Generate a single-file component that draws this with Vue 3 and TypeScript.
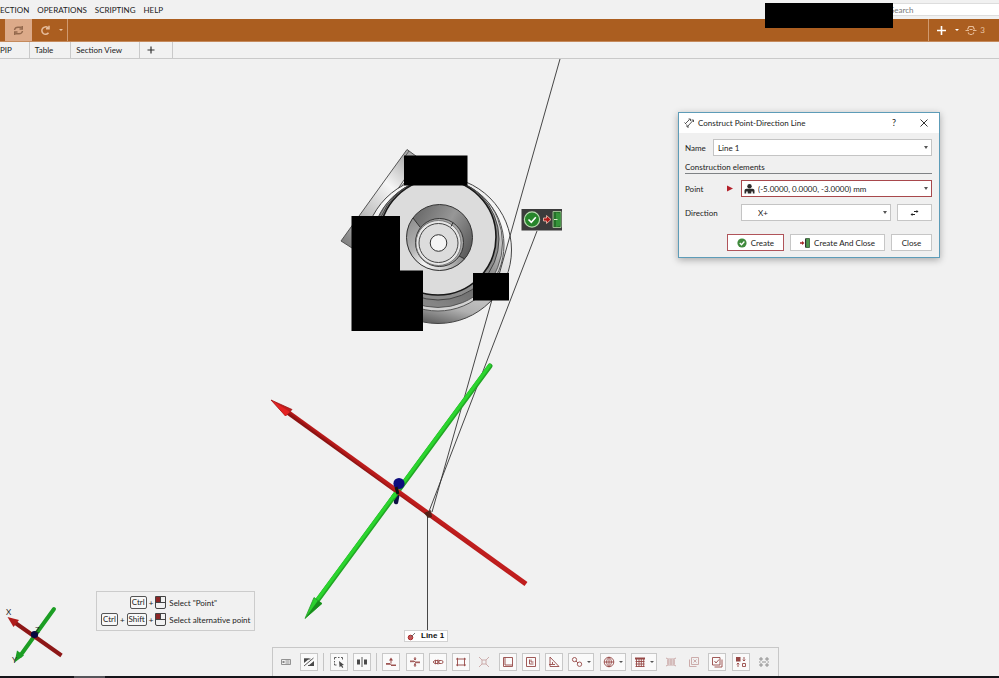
<script setup lang="ts">
import { ref } from 'vue'

interface Tool {
  kind: 'tool' | 'menu' | 'sep'
  label?: string
  tone?: string
  stroke?: string
  fill?: string
  flat?: boolean
  faded?: boolean
}

const name = ref('Line 1')
const point = ref('(-5.0000, 0.0000, -3.0000) mm')
const direction = ref('X+')

const menus = ['ECTION', 'OPERATIONS', 'SCRIPTING', 'HELP']
const tabs = ['PIP', 'Table', 'Section View']

const dark = '#4a4a4a'
const red = '#964846'

const tools: Tool[] = [
  { kind: 'tool', label: 'Name tag', tone: '#888', stroke: 'M1.500 3.500h9v5h-9zM5.500 5h4M5.500 7h4', fill: 'M2.500 5h2v2h-2z', flat: true },
  { kind: 'tool', label: 'Toggle shading', tone: dark, stroke: 'M1 10L10.500 2M1 3h6.500M5 9.500h6', fill: 'M1 2.500h5.500L1 7zM11 5v5H5z' },
  { kind: 'sep' },
  { kind: 'tool', label: 'Select area', tone: dark, stroke: 'M1.500 3.500v-2h2M5 1.500h1.500M8 1.500h1.500v2M1.500 5v1.500M1.500 7.500v1.500h2', fill: 'M6 5l5 4-2 .3 1.300 2-1 .7-1.300-2-1.400 1.300z' },
  { kind: 'tool', label: 'Mirror', tone: dark, stroke: 'M6 1v10', fill: 'M1 3.500h3v5H1zM8 3.500h3v5H8z' },
  { kind: 'sep' },
  { kind: 'tool', label: 'Project point', tone: red, stroke: 'M1 7.500h4l1 1.500h5M6 3v4.500M1 8.300h4M6 9.500h5', fill: 'M4 4.500l2-3 2 3z' },
  { kind: 'tool', label: 'Intersect', tone: red, stroke: 'M1 5h4l1 1h5M1 5.700h4M6 6.700h5M6 1v3M6 7v4', fill: 'M4.500 2.500h3L6 4.500zM4.500 9.500h3L6 7.500z' },
  { kind: 'tool', label: 'Distance', tone: red, stroke: 'M1 6l2.500-2v4zM3.500 4.500H6v3H3.500M6 3.500v5M7 4.500h2.500q1.500 0 1.500 1.500t-1.500 1.500H7z' },
  { kind: 'tool', label: 'Plane', tone: red, stroke: 'M2.500 3h7v6h-7zM1 3h1.500M9.500 3H11M1 9h1.500M9.500 9H11M2.500 1.800V3M9.500 1.800V3M2.500 9v1.200M9.500 9v1.200' },
  { kind: 'tool', label: 'Explode', tone: red, stroke: 'M4 4h4v4H4zM1 1l3 3M11 1L8 4M1 11l3-3M11 11L8 8', flat: true, faded: true },
  { kind: 'tool', label: 'Rectangle', tone: red, stroke: 'M1.500 1.500h9v9h-9zM3 1.500V9h7.500' },
  { kind: 'tool', label: 'Local frame', tone: red, stroke: 'M1.500 1.500h9v9h-9zM4.500 3.500v4.500H8.500M6 3.500V6h2.500' },
  { kind: 'tool', label: 'Angle', tone: red, stroke: 'M2 1v9.500h9zM4.500 6v2.500H7M1 8.500h3.500' },
  { kind: 'menu', label: 'Circles', tone: red, stroke: 'M3.500 1.500a2 2 0 100 4.200 2 2 0 000-4.200zM8.500 6a2.200 2.200 0 100 4.400A2.200 2.200 0 008.500 6zM5 5l2 2' },
  { kind: 'menu', label: 'Sphere grid', tone: red, stroke: 'M6 1.200a4.800 4.800 0 100 9.600 4.800 4.800 0 000-9.600zM6 1v10M1 6h10M6 1.200c-3.200 3-3.200 6.600 0 9.600M6 1.200c3.200 3 3.200 6.600 0 9.600' },
  { kind: 'menu', label: 'Mesh', tone: red, stroke: 'M2.500 3v8M5 3v8M7.300 3v8M9.700 3v8M1.500 5.500h9M1.500 8h9M1.500 10.500h9', fill: 'M1 1.500h10V3.500H1z' },
  { kind: 'tool', label: 'Edit mesh', tone: red, stroke: 'M1 2l2 1h6l2-1M3 3v6M6 3v6M9 3v6M2 5h8M2 7h8M1 10l2-1h6l2 1', flat: true, faded: true },
  { kind: 'tool', label: 'Remove layer', tone: red, stroke: 'M3.500 1.500h7v7h-7zM1.500 3.500v7h7M5.500 3.500l3 3M8.500 3.500l-3 3', flat: true, faded: true },
  { kind: 'tool', label: 'Check layer', tone: red, stroke: 'M1.500 1.500h7.500v7.500H1.500zM3.500 11H11V3.500M3.500 5l1.500 2 3-3.500' },
  { kind: 'tool', label: 'Swap elements', tone: red, stroke: 'M7.500 7.500h3v3h-3zM9 1v4M7.700 3.700L9 5l1.300-1.300M3 11V7M1.700 8.300L3 7l1.300 1.300', fill: 'M1 1h4.500v4.500H1z' },
  { kind: 'tool', label: 'Grid options', tone: '#888', stroke: 'M1 3h4M3 1v4M7 3h4M9 1v4M1 9h4M3 7v4M7 9h4M9 7v4M1 6h1.500M4 6h4M9.500 6H11', flat: true },
]

const mouseHints = [
  { keys: ['Ctrl'], text: 'Select "Point"' },
  { keys: ['Ctrl', 'Shift'], text: 'Select alternative point' },
]
</script>

<template>
  <div class="app">
    <header class="top">
      <nav class="menubar" aria-label="Main menu">
        <button v-for="m in menus" :key="m" class="menu">{{ m }}</button>
        <input class="search" type="search" placeholder="Search" aria-label="Search" />
      </nav>
      <div class="ribbon">
        <button class="rb active" aria-label="Refresh">
          <svg width="11" height="11" viewBox="0 0 11 11" fill="none" stroke="#94694d" stroke-width="1.400">
            <path d="M1.500 5Q2 2.200 5 2.200h3.500M9.500 6Q9 8.800 6 8.800H2.500M9.300 1v3H6.500M1.700 10V7H4.500" />
          </svg>
        </button>
        <button class="rb split" aria-label="Redo">
          <svg width="11" height="11" viewBox="0 0 11 11" fill="none" stroke="#e6bd9d" stroke-width="1.500">
            <path d="M8.500 7.800A3.700 3.700 0 118 2.800M9 .8v3H6" />
          </svg>
          <i class="caret"></i>
        </button>
        <div class="ribbon-end">
          <button class="rb add" aria-label="Add">
            <svg width="11" height="11" viewBox="0 0 11 11" stroke="#fff" stroke-width="1.600"><path d="M5.500 1v9M1 5.500h9" /></svg>
            <i class="caret"></i>
          </button>
          <button class="rb count">
            <svg width="12" height="11" viewBox="0 0 12 11" fill="none" stroke="#e8bd98" stroke-width="1.200">
              <path d="M2.500 4.500L4 1.500h4l1.500 3M.5 5.500h3.500M8 5.500h3.500M3 7.500L4.500 9.500M9 7.500L7.500 9.500M4.500 4.500h3M5 9.500h2" />
            </svg>
            <span>3</span>
          </button>
        </div>
      </div>
      <div class="tabs">
        <button v-for="t in tabs" :key="t" class="tab">{{ t }}</button>
        <button class="tab plus" aria-label="Add view">
          <svg width="8" height="8" viewBox="0 0 8 8" stroke="#333" stroke-width="1.200"><path d="M4 .5v7M.5 4h7" /></svg>
        </button>
      </div>
      <div class="cover"></div>
    </header>

    <main class="view">
      <svg class="scene" viewBox="0 59 999 617" preserveAspectRatio="xMinYMin meet" role="img" aria-label="3D view">
        <defs>
          <linearGradient id="flange" x1="0" y1="1" x2=".75" y2="0">
            <stop offset="0" stop-color="#777" /><stop offset=".4" stop-color="#c4c4c4" />
            <stop offset=".7" stop-color="#f6f6f6" /><stop offset="1" stop-color="#aaa" />
          </linearGradient>
          <linearGradient id="rim" x1=".75" y1="0" x2=".5" y2="1">
            <stop offset="0" stop-color="#ececec" /><stop offset=".3" stop-color="#fafafa" />
            <stop offset=".65" stop-color="#d6d6d6" /><stop offset=".88" stop-color="#b0b0b0" />
            <stop offset="1" stop-color="#666" />
          </linearGradient>
          <linearGradient id="band" x1=".9" y1=".2" x2=".5" y2="1">
            <stop offset="0" stop-color="#eee" /><stop offset=".4" stop-color="#aaa" />
            <stop offset=".7" stop-color="#6c6c6c" /><stop offset="1" stop-color="#868686" />
          </linearGradient>
          <linearGradient id="cone" x1=".1" y1=".2" x2="1" y2=".7">
            <stop offset="0" stop-color="#6a6a6a" /><stop offset=".5" stop-color="#979797" />
            <stop offset="1" stop-color="#575757" />
          </linearGradient>
          <linearGradient id="conelight" x1=".2" y1="0" x2=".6" y2="1">
            <stop offset="0" stop-color="#8e8e8e" /><stop offset=".6" stop-color="#b4b4b4" />
            <stop offset="1" stop-color="#f2f2f2" />
          </linearGradient>
          <linearGradient id="conelow" x1="0" y1="0" x2="1" y2="0">
            <stop offset="0" stop-color="#f2f2f2" /><stop offset=".5" stop-color="#d0d0d0" />
            <stop offset="1" stop-color="#888" />
          </linearGradient>
          <linearGradient id="redrod" gradientUnits="userSpaceOnUse" x1="396" y1="494" x2="399" y2="490">
            <stop offset="0" stop-color="#8c1212" /><stop offset=".5" stop-color="#b81a1a" /><stop offset="1" stop-color="#c01e1e" />
          </linearGradient>
        </defs>

        <!-- measured part -->
        <path d="M407 149.500L420 159 404 180 379 217 352 248 341 241z" fill="url(#flange)" stroke="#555" />
        <path d="M409 151L404 158M404 183L378 219M404 188L382 219" stroke="#555" stroke-width=".9" fill="none" />
        <circle cx="438" cy="250" r="73.500" fill="url(#rim)" stroke="#444" />
        <circle cx="438" cy="245" r="66" fill="#d2d2d2" stroke="#555" />
        <circle cx="438" cy="243" r="64.500" fill="url(#band)" stroke="#444" stroke-width=".8" />
        <circle cx="438" cy="239" r="61" fill="#8c8c8c" stroke="#444" />
        <circle cx="438" cy="237" r="58" fill="#dcdcdc" stroke="#181818" stroke-width="1.600" />
        <circle cx="439.500" cy="237.500" r="33" fill="url(#cone)" />
        <path d="M413 218A33 33 0 00424 266.500L430 262A24 24 0 01420 227z" fill="url(#conelight)" />
        <path d="M464 259A33 33 0 01424 266.500L428 260A24 24 0 00459 256z" fill="url(#conelow)" />
        <circle cx="439.500" cy="237.500" r="33" fill="none" stroke="#333" />
        <path d="M413 218l7 9M459 256l6 3" stroke="#333" />
        <circle cx="439.500" cy="242.500" r="24" fill="#a8a8a8" stroke="#333" />
        <circle cx="438.500" cy="243" r="22.500" fill="#e6e6e6" stroke="#666" stroke-width=".8" />
        <path d="M453 222.500l-2 4" stroke="#333" />
        <circle cx="438.500" cy="243" r="19.500" fill="#dcdcdc" stroke="#444" />
        <circle cx="438.500" cy="243" r="8.300" fill="#f4f4f4" stroke="#333" />

        <!-- leader lines -->
        <path d="M560 59L432 512M537 231L428 514M427.500 515V630" fill="none" stroke="#333" stroke-width=".9" />

        <!-- redacted regions -->
        <path d="M404 155.500h63.500v30H404zM351.500 216H400v54.500h23v60.500h-71.500zM473 273h36v27.500h-36z" fill="#000" />

        <!-- coordinate system -->
        <path d="M399 486l-3 16" stroke="#101044" stroke-width="4.500" stroke-linecap="round" />
        <path d="M490 366L317 601" stroke="#22a625" stroke-width="5" stroke-linecap="round" />
        <path d="M489.500 365.500L316.500 600.500" stroke="#2bd52e" stroke-width="3.200" stroke-linecap="round" />
        <path d="M305 618.500L314 597.500 322 603.500z" fill="#2bd02e" stroke="#27982a" stroke-width=".8" />
        <path d="M305 618.500L318 600.500 322 603.500z" fill="#188c1c" />
        <path d="M286 411L526 584" stroke="url(#redrod)" stroke-width="5" />
        <path d="M271 400L292 409.500 285.500 416z" fill="#c21c1c" stroke="#911" stroke-width=".8" />
        <path d="M272 400.500L290 412 285.500 416z" fill="#e32323" />
        <path d="M396 493l-3 4" stroke="#2bd52e" stroke-width="4" />
        <circle cx="399" cy="483.500" r="5.600" fill="#0c0c7c" />
        <path d="M396 487l2 7" stroke="#111" stroke-width="3" />
        <path d="M424 513l7-3 1 7-4 1z" fill="#3b2014" opacity=".8" />

        <!-- orientation triad -->
        <path d="M54 609L20 656" stroke="#1c9e24" stroke-width="4" stroke-linecap="round" />
        <path d="M14.500 662.500l2.500-12 7 5z" fill="#1c9e24" />
        <path d="M14 622L61.500 655.500" stroke="#8d1717" stroke-width="4" />
        <path d="M7.500 617l11.500 3-5.500 7z" fill="#b01c1c" />
        <circle cx="34.500" cy="634.500" r="3.600" fill="#080840" />
        <g class="axis"><text x="6" y="615">X</text><text x="35" y="633">Z</text><text x="12" y="663">Y</text></g>

        <!-- quick confirm popup -->
        <rect x="521.500" y="209" width="40.500" height="21.500" fill="#3b3b3b" />
        <circle cx="532" cy="219.500" r="7.600" fill="#26852b" stroke="#b8dcb0" stroke-width="1.200" />
        <path d="M528.500 219.500l2.800 2.800 4.500-5" fill="none" stroke="#fff" stroke-width="1.600" />
        <path d="M543.500 218h3v-2.500l4.500 4-4.500 4V221h-3z" fill="#b01818" stroke="#e6b8a8" stroke-width=".9" />
        <path d="M553 211.500h8v16h-8z" fill="#26702a" stroke="#9cba90" />
        <path d="M556 212.500l4.500 1v12l-4.500 1.500z" fill="#35953a" />
        <path d="M554 219.500h3.500" stroke="#d8e8c8" />
      </svg>

      <div class="line-tag">
        <svg width="9" height="10" viewBox="0 0 9 10" fill="none" stroke="#a32a2a"><circle cx="3.500" cy="6.500" r="2.300" fill="#c55" /><path d="M3.500 6.500L8 2" stroke="#777" /></svg>
        <b>Line 1</b>
      </div>

      <section class="dialog" role="dialog" aria-labelledby="dlg-title">
        <div class="titlebar">
          <svg width="10" height="10" viewBox="0 0 10 10" stroke="#444" fill="none"><path d="M1 6L5.500 1.500M3.500 8.500L9 2.500M.5 4.500l2 2M4.500 1h2v2M3 7v2h2M7.500 2h2v2" stroke-width=".9" /></svg>
          <h1 id="dlg-title">Construct Point-Direction Line</h1>
          <button class="tb" aria-label="Help">?</button>
          <button class="tb" aria-label="Close dialog">
            <svg width="8" height="8" viewBox="0 0 8 8" stroke="#333"><path d="M.5.5l7 7M7.500.5l-7 7" /></svg>
          </button>
        </div>
        <form class="body" @submit.prevent>
          <div class="row name">
            <label for="f-name">Name</label>
            <div class="combo"><select id="f-name" v-model="name"><option>Line 1</option></select></div>
          </div>
          <h2>Construction elements</h2>
          <div class="row">
            <label for="f-point">Point</label>
            <svg class="marker" width="7" height="7" viewBox="0 0 7 7" fill="#b3202a"><path d="M0 .5l6 3L0 6.500z" /></svg>
            <div class="combo required">
              <svg class="person" width="11" height="10" viewBox="0 0 11 10" fill="#2c2c2c"><circle cx="5.500" cy="2.200" r="2.200" /><path d="M.5 9.500V6.500Q.5 4.700 2.500 4.700h6q2 0 2 1.800v3H8.800V7.500H7.300v2H3.700v-2H2.200v2z" /></svg>
              <select id="f-point" v-model="point"><option>(-5.0000, 0.0000, -3.0000) mm</option></select>
            </div>
          </div>
          <div class="row">
            <label for="f-dir">Direction</label>
            <div class="combo"><select id="f-dir" v-model="direction"><option>X+</option></select></div>
            <button class="btn swap" aria-label="Reverse direction">
              <svg width="9" height="8" viewBox="0 0 9 8" stroke="#222" fill="#222"><path d="M4 2.500h3M5 5.500H2" /><path d="M6.500 1l2 1.500-2 1.500zM2.500 4L.5 5.500l2 1.500z" stroke="none" /></svg>
            </button>
          </div>
          <div class="actions">
            <button class="btn primary">
              <svg width="10" height="10" viewBox="0 0 10 10"><circle cx="5" cy="5" r="4.600" fill="#3f8a3c" /><path d="M2.800 5l1.700 1.700L7.400 3.500" fill="none" stroke="#fff" stroke-width="1.300" /></svg>
              Create
            </button>
            <button class="btn">
              <svg width="10" height="10" viewBox="0 0 10 10"><path d="M0 4.300h2V3l2.500 2L2 7V5.700H0z" fill="#a52828" /><path d="M6 .5h3.500v9H6z" fill="#4d9a4c" stroke="#4c704c" /><path d="M5.500.5v9" stroke="#333" /></svg>
              Create And Close
            </button>
            <button class="btn">Close</button>
          </div>
        </form>
      </section>

      <aside class="hints">
        <template v-for="h in mouseHints" :key="h.text">
          <div class="keys">
            <template v-for="k in h.keys" :key="k"><kbd>{{ k }}</kbd><span>+</span></template>
            <svg width="11" height="13" viewBox="0 0 11 13" fill="none"><path d="M1 .5h4.500v6H.5V1z" fill="#8c2626" /><path d="M.5.5h10v10.500q0 1.500-1.500 1.500H2Q.5 12.500.5 11zM.5 6.500h10M5.500.5v6" stroke="#444" /></svg>
          </div>
          <span>{{ h.text }}</span>
        </template>
      </aside>

      <div class="toolbar" role="toolbar" aria-label="Construction tools">
        <template v-for="(t, i) in tools" :key="i">
          <span v-if="t.kind === 'sep'" class="sep"></span>
          <button v-else class="tool" :class="{ flat: t.flat, faded: t.faded, drop: t.kind === 'menu' }" :aria-label="t.label">
            <svg width="12" height="12" viewBox="0 0 12 12">
              <path v-if="t.fill" :d="t.fill" :fill="t.tone" />
              <path :d="t.stroke" fill="none" :stroke="t.tone" stroke-width=".9" />
            </svg>
            <i v-if="t.kind === 'menu'" class="caret"></i>
          </button>
        </template>
      </div>
    </main>
    <footer class="taskbar"><span></span></footer>
  </div>
</template>

<style>
body {
  margin: 0;
  background: #f1f1f1;
}
</style>

<style scoped>
.app {
  display: flex;
  flex-direction: column;
  min-height: 100vh;
  background: #f1f1f1;
  color: #222;
  font: 8px/12px Lato, "Open Sans", sans-serif;
  overflow: hidden;
}
.app * { box-sizing: border-box; }
button, input, select {
  font: inherit;
  color: inherit;
  margin: 0;
  padding: 0;
  border: 0;
  border-radius: 0;
  background: none;
}
svg { display: block; flex: none; }
.caret {
  width: 0;
  height: 0;
  border: 2px solid transparent;
  border-top-color: currentColor;
  border-bottom: 0;
}

.top { position: relative; }
.menubar {
  display: flex;
  align-items: center;
  height: 19px;
  gap: 8px;
}
.search {
  width: 112px;
  height: 13px;
  margin-left: auto;
  padding-left: 2px;
  background: #fff;
  border: 1px solid #ddd;
  border-right: 0;
  outline: 0;
}
.search::placeholder { color: #777; opacity: 1; }
.cover {
  position: absolute;
  top: 3px;
  right: 106px;
  width: 128px;
  height: 25px;
  background: #000;
}
.ribbon {
  display: flex;
  height: 23px;
  padding-left: 5px;
  background: #ab5e20;
  border-bottom: 1px solid #c58a5c;
}
.rb {
  display: flex;
  align-items: center;
  justify-content: center;
  color: #e8c4a4;
}
.rb.active { width: 27px; background: #dcaa89; }
.rb.split {
  width: 36px;
  gap: 8px;
  justify-content: flex-end;
  padding-right: 4px;
  border-right: 1px solid #d09a70;
}
.ribbon-end {
  display: flex;
  margin-left: auto;
  padding-right: 14px;
  border-left: 1px solid #d09a70;
}
.rb.add { width: 36px; gap: 8px; color: #fff; }
.rb.count { gap: 3px; }
.tabs {
  display: flex;
  height: 17px;
  border-bottom: 1px solid #c9c9c9;
}
.tab {
  padding: 0 17px 0 5px;
  border-right: 1px solid #c9c9c9;
}
.tab:first-child { padding-left: 0; }
.tab.plus {
  display: flex;
  align-items: center;
  width: 33px;
  padding: 0 0 0 7px;
}

.view {
  position: relative;
  flex: 1;
}
.scene {
  position: absolute;
  inset: 0;
  width: 100%;
  height: 100%;
}
.axis { font-size: 8px; fill: #222; }

.line-tag {
  position: absolute;
  left: 404px;
  bottom: 34px;
  display: flex;
  align-items: center;
  gap: 5px;
  padding: 0 3px 0 2px;
  background: #fff;
  border: 1px solid #d2d2d2;
  font: 8px/10px "Liberation Sans", sans-serif;
  color: #111;
}

.dialog {
  position: absolute;
  top: 53px;
  right: 59px;
  width: 262px;
  background: #f0f0f0;
  border: 1px solid #5d9cb8;
  box-shadow: 0 2px 7px rgba(0, 0, 0, 0.3);
}
.titlebar {
  display: flex;
  align-items: center;
  height: 20px;
  padding: 0 7px 0 5px;
  background: #fff;
}
.titlebar h1 {
  margin: 0 auto 0 4px;
  font: inherit;
}
.tb {
  display: flex;
  justify-content: center;
  width: 16px;
  margin-left: 14px;
}
.titlebar .tb { font-size: 9px; }
.body {
  display: flex;
  flex-direction: column;
  padding: 6px 7px 6px 6px;
}
.row {
  display: grid;
  grid-template-columns: 42px 14px 1fr auto;
  align-items: center;
  height: 17px;
  margin-bottom: 7px;
}
.row.name {
  grid-template-columns: 28px 1fr;
  margin-bottom: 5px;
}
.row > .combo { grid-column: 3; }
.row.name > .combo { grid-column: 2; }
.row > .combo.required { grid-column: 3 / -1; border-color: #a8484c; }
.combo {
  position: relative;
  display: flex;
  align-items: center;
  height: 17px;
  background: #fff;
  border: 1px solid #c4c4c4;
}
.combo select {
  flex: 1;
  height: 15px;
  padding-left: 4px;
  appearance: none;
  outline: 0;
}
.row > .combo.required select { padding-left: 3px; }
.row:not(.name) > .combo:not(.required) select { padding-left: 16px; }
.combo::after {
  content: "";
  position: absolute;
  right: 3px;
  top: 6px;
  border: 2px solid transparent;
  border-top: 3px solid #555;
  border-bottom: 0;
  pointer-events: none;
}
.person { margin-left: 2px; }
.body h2 {
  margin: 0 0 6px;
  font: inherit;
  border-bottom: 1px solid #7f8285;
}
.btn {
  display: flex;
  align-items: center;
  justify-content: center;
  gap: 4px;
  height: 17px;
  min-width: 41px;
  padding: 0 9px;
  background: #fff;
  border: 1px solid #c6c6c6;
}
.btn.swap { width: 35px; min-width: 35px; margin-left: 6px; padding: 0; }
.btn.primary { border-color: #b0545a; }
.actions {
  display: flex;
  justify-content: flex-end;
  gap: 6px;
  margin-top: 6px;
}

.hints {
  position: absolute;
  left: 96px;
  bottom: 45px;
  display: grid;
  grid-template-columns: auto auto;
  gap: 4px 3px;
  align-items: center;
  padding: 4px;
  border: 1px solid #ccc;
}
.keys {
  display: flex;
  align-items: center;
  justify-content: flex-end;
  gap: 2px;
}
kbd {
  padding: 0 1px;
  border: 1px solid #555;
  border-radius: 2px;
  font: 8px/11px Lato, "Open Sans", sans-serif;
  background: #f8f8f8;
}

.toolbar {
  position: absolute;
  left: 272px;
  bottom: 0;
  display: flex;
  align-items: center;
  justify-content: space-between;
  width: 507px;
  height: 29px;
  padding: 0 5px 0 4px;
  border: 1px solid #c8c8c8;
  border-bottom: 0;
  background: #f1f1f1;
}
.tool {
  display: flex;
  align-items: center;
  justify-content: center;
  width: 18px;
  height: 18px;
  background: #fafafa;
  border: 1px solid #c8c8c8;
}
.tool.drop { width: 26px; gap: 4px; color: #555; }
.tool.flat { background: none; border-color: transparent; }
.tool.faded svg { opacity: 0.45; }
.sep { width: 1px; height: 18px; background: #c4c4c4; }

.taskbar {
  height: 2px;
  padding-left: 74px;
  background: #15151a;
}
.taskbar span {
  display: block;
  width: 31px;
  height: 2px;
  background: #55555a;
}
</style>
